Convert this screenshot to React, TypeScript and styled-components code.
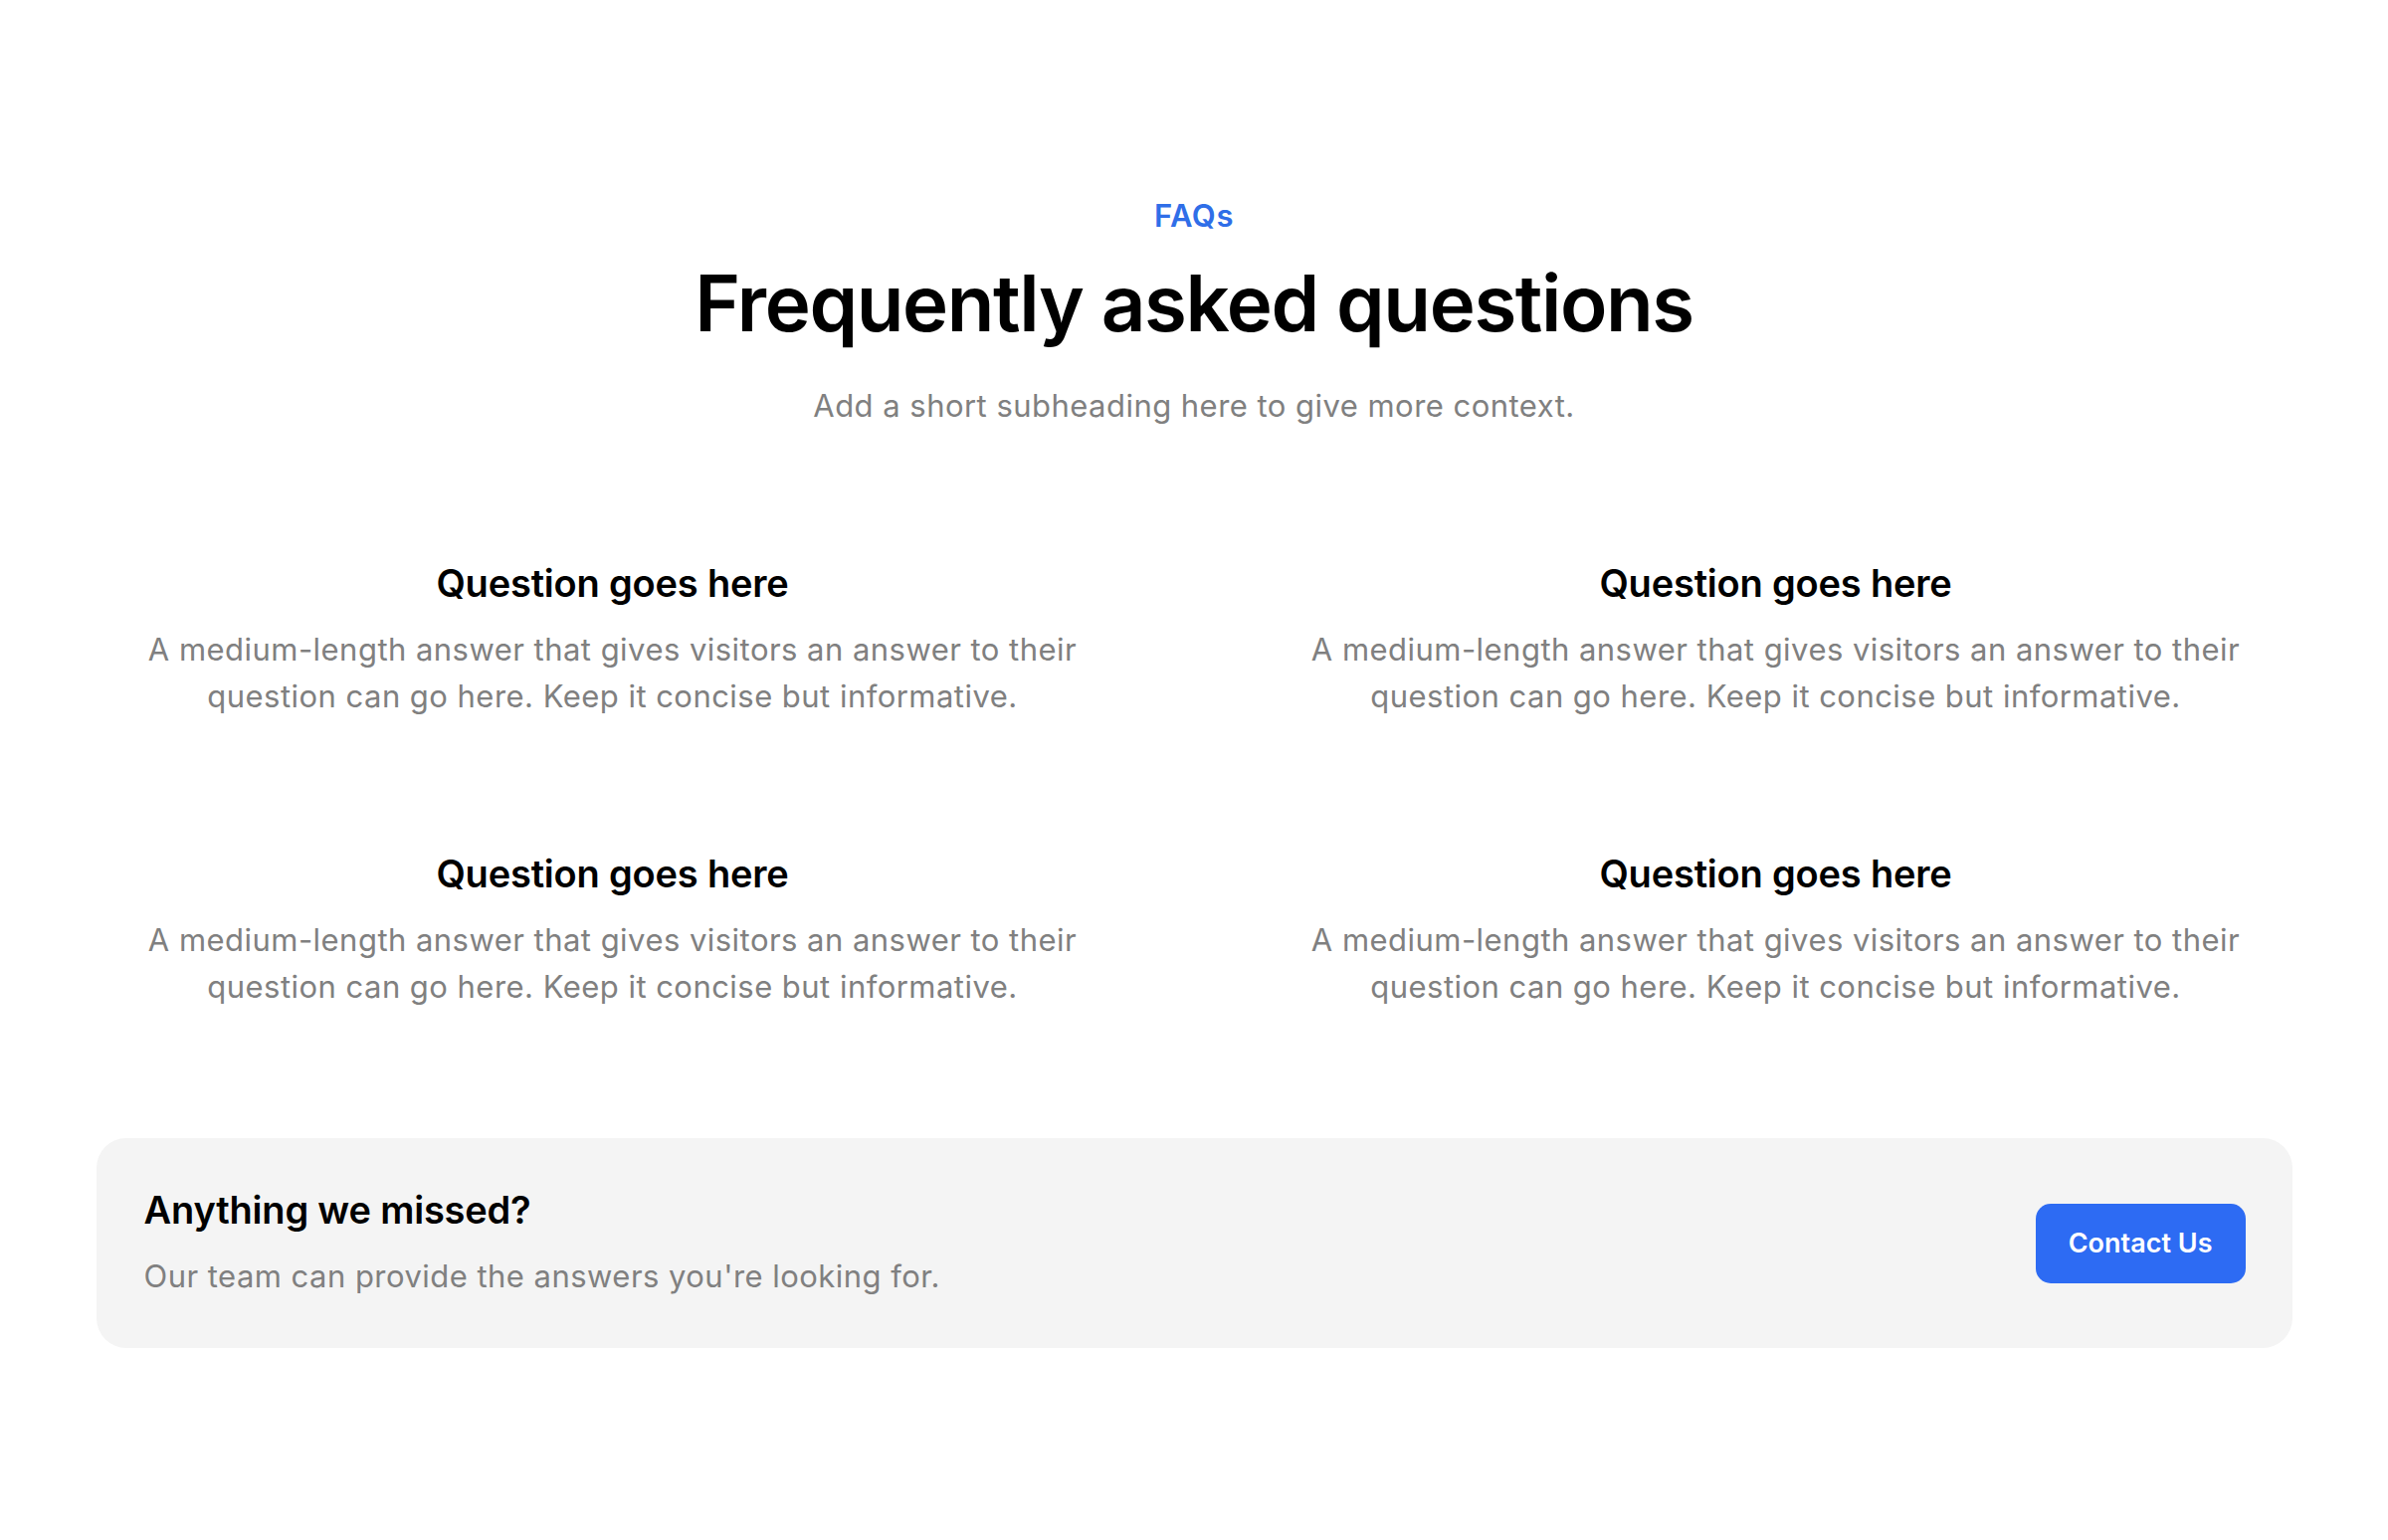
import React from 'react';
import styled, { createGlobalStyle } from 'styled-components';

const GlobalStyle = createGlobalStyle`
  * { box-sizing: border-box; }
  body {
    margin: 0;
    background: #ffffff;
    font-family: Inter, "Noto Sans", sans-serif;
    -webkit-font-smoothing: antialiased;
  }
`;

const faqs = [
  {
    q: 'Question goes here',
    a: 'A medium-length answer that gives visitors an answer to their question can go here. Keep it concise but informative.',
  },
  {
    q: 'Question goes here',
    a: 'A medium-length answer that gives visitors an answer to their question can go here. Keep it concise but informative.',
  },
  {
    q: 'Question goes here',
    a: 'A medium-length answer that gives visitors an answer to their question can go here. Keep it concise but informative.',
  },
  {
    q: 'Question goes here',
    a: 'A medium-length answer that gives visitors an answer to their question can go here. Keep it concise but informative.',
  },
];

function App() {
  return (
    <>
      <GlobalStyle />
      <Section>
        <Header>
          <Eyebrow>FAQs</Eyebrow>
          <Title>Frequently asked questions</Title>
          <Subtitle>Add a short subheading here to give more context.</Subtitle>
        </Header>

        <Grid>
          {faqs.map((item, i) => (
            <Item key={i}>
              <Question>{item.q}</Question>
              <Answer>{item.a}</Answer>
            </Item>
          ))}
        </Grid>

        <Banner>
          <BannerText>
            <BannerTitle>Anything we missed?</BannerTitle>
            <BannerSub>Our team can provide the answers you're looking for.</BannerSub>
          </BannerText>
          <Button>Contact Us</Button>
        </Banner>
      </Section>
    </>
  );
}

export default App;

const Section = styled.section`
  width: 2207px;
  margin: 0 auto;
  padding: 194px 0 192px;
  display: flex;
  flex-direction: column;
`;

const Header = styled.header`
  display: flex;
  flex-direction: column;
  align-items: center;
  text-align: center;
`;

const Eyebrow = styled.p`
  margin: 0;
  font-size: 31px;
  line-height: 45px;
  font-weight: 600;
  letter-spacing: 0.02em;
  color: #2f6ee8;
`;

const Title = styled.h1`
  margin: 20px 0 0;
  font-size: 78px;
  line-height: 92px;
  font-weight: 600;
  letter-spacing: -0.018em;
  color: #000;
`;

const Subtitle = styled.p`
  margin: 33px 0 0;
  font-size: 31px;
  line-height: 47px;
  font-weight: 400;
  letter-spacing: 0.015em;
  color: #808080;
`;

const Grid = styled.div`
  margin-top: 132px;
  display: grid;
  grid-template-columns: 1fr 1fr;
  column-gap: 131px;
  row-gap: 132px;
`;

const Item = styled.div`
  display: flex;
  flex-direction: column;
  align-items: center;
  text-align: center;
  gap: 19px;
`;

const Question = styled.h3`
  margin: 0;
  font-size: 38px;
  line-height: 47px;
  font-weight: 600;
  letter-spacing: -0.005em;
  color: #000;
`;

const Answer = styled.p`
  margin: 0;
  font-size: 31px;
  line-height: 47px;
  font-weight: 400;
  letter-spacing: 0.015em;
  color: #808080;
`;

const Banner = styled.div`
  margin-top: 129px;
  background: #f4f4f4;
  border-radius: 30px;
  padding: 49px 47px 49px 48px;
  display: flex;
  align-items: center;
  justify-content: space-between;
`;

const BannerText = styled.div`
  display: flex;
  flex-direction: column;
  gap: 19px;
`;

const BannerTitle = styled.h4`
  margin: 0;
  font-size: 38px;
  line-height: 47px;
  font-weight: 600;
  letter-spacing: -0.005em;
  color: #000;
`;

const BannerSub = styled.p`
  margin: 0;
  font-size: 31px;
  line-height: 47px;
  letter-spacing: 0.015em;
  color: #808080;
`;

const Button = styled.button`
  height: 80px;
  padding: 0 33px;
  border: none;
  border-radius: 15px;
  background: #2d6bf3;
  color: #fff;
  font-family: Inter, "Noto Sans", sans-serif;
  font-size: 27px;
  font-weight: 600;
  cursor: pointer;
`;
